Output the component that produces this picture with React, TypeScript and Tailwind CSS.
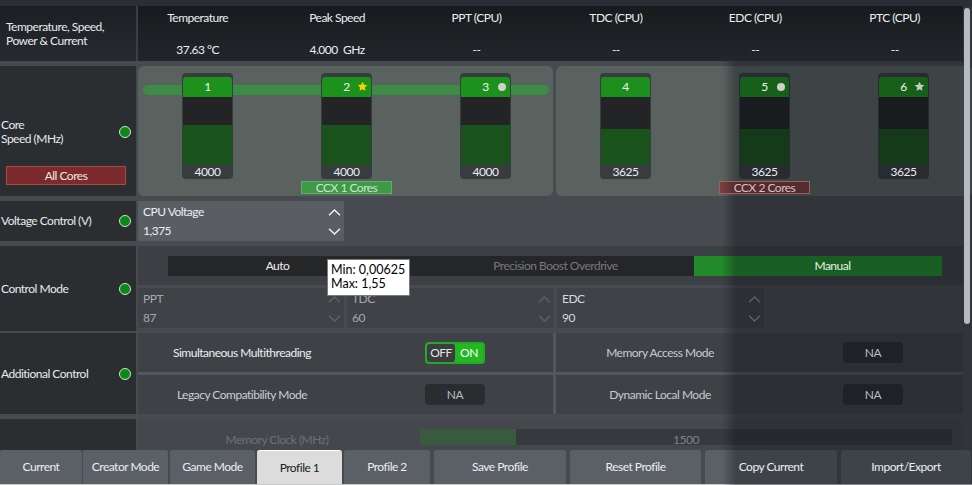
import React from 'react';

type Core = { n: number; value: number; fill: number; icon?: 'gold' | 'dot' | 'gray' };

// the right third of the window sits under a darker translucent panel; a viewport-fixed
// gradient on each background darkens it there without dimming the text
const DIM = 'bg-fixed bg-[linear-gradient(to_right,transparent_722px,rgba(10,14,20,0.36)_736px)]';

const cores: Core[] = [
  { n: 1, value: 4000, fill: 40 },
  { n: 2, value: 4000, fill: 40, icon: 'gold' },
  { n: 3, value: 4000, fill: 40, icon: 'dot' },
  { n: 4, value: 3625, fill: 36 },
  { n: 5, value: 3625, fill: 36, icon: 'dot' },
  { n: 6, value: 3625, fill: 36, icon: 'gray' },
];

const metrics = [
  { label: 'Temperature', value: '37.63 °C' },
  { label: 'Peak Speed', value: '4.000  GHz' },
  { label: 'PPT (CPU)', value: '--' },
  { label: 'TDC (CPU)', value: '--' },
  { label: 'EDC (CPU)', value: '--' },
  { label: 'PTC (CPU)', value: '--' },
];

const tabs = [
  { label: 'Current', w: 'w-[82px]', ml: 'ml-0' },
  { label: 'Creator Mode', w: 'w-[85px]', ml: 'ml-[1px]' },
  { label: 'Game Mode', w: 'w-[85px]', ml: 'ml-[2px]' },
  { label: 'Profile 1', w: 'w-[85px]', ml: 'ml-[2px]', active: true },
  { label: 'Profile 2', w: 'w-[86px]', ml: 'ml-[2px]' },
  { label: 'Save Profile', w: 'w-[132px]', ml: 'ml-[4px]' },
  { label: 'Reset Profile', w: 'w-[131px]', ml: 'ml-[4px]' },
  { label: 'Copy Current', w: 'w-[132px]', ml: 'ml-[4px]' },
  { label: 'Import/Export', w: 'w-[130px]', ml: 'ml-[4px]' },
];

function Star({ color }: { color: string }) {
  return (
    <svg width="11" height="11" viewBox="0 0 24 24">
      <path d="M12 1.5l3.2 6.9 7.3.8-5.5 5 1.6 7.3L12 17.8l-6.6 3.7 1.6-7.3-5.5-5 7.3-.8z" fill={color} />
    </svg>
  );
}

function Chevron({ up, color }: { up?: boolean; color: string }) {
  return (
    <svg width="13" height="7" viewBox="0 0 13 7">
      <path d={up ? 'M1 6.2L6.5 1 12 6.2' : 'M1 0.8L6.5 6 12 0.8'} fill="none" stroke={color} strokeWidth="1.4" />
    </svg>
  );
}

function Dot() {
  return <span className="block w-[12px] h-[12px] rounded-full bg-[#0a8a14] border-[1.5px] border-[#d8dcd8]" />;
}

function CoreBar({ core }: { core: Core }) {
  return (
    <div className={`w-[51px] h-[106px] rounded-[4px] bg-[#393c3f] ${DIM} flex flex-col px-[1px] pt-[4px]`}>
      <div
        className={`relative h-[20px] rounded-t-[3px] flex items-center justify-center text-[12px] text-[#eef5ee] ${DIM} ${
          core.n > 3 ? 'bg-[#1c8e1c]' : 'bg-[#1c921c]'
        }`}
      >
        {core.n}
        {core.icon === 'gold' && (
          <span className="absolute right-[3px] top-[4px]">
            <Star color="#f7d400" />
          </span>
        )}
        {core.icon === 'gray' && (
          <span className="absolute right-[3px] top-[4px]">
            <Star color="#c9c9c9" />
          </span>
        )}
        {core.icon === 'dot' && <span className="absolute right-[4px] top-[6px] w-[8px] h-[8px] rounded-full bg-[#cfcfcf]" />}
      </div>
      <div className={`h-[68px] bg-[#222426] ${DIM} flex flex-col justify-end`}>
        <div className={`bg-[#1a521b] ${DIM}`} style={{ height: core.fill }} />
      </div>
      <div className="h-[13px] text-center text-[12px] leading-[13px] text-[#e6ecf2]">{core.value}</div>
    </div>
  );
}

function CoreGroup({ items, ccx, width }: { items: Core[]; ccx: 1 | 2; width: string }) {
  return (
    <div className={`relative h-full rounded-[6px] bg-[#5a6260] ${DIM} ${width}`}>
      {ccx === 1 && <div className="absolute left-[5px] right-[4px] top-[19px] h-[10px] rounded-full bg-[#3d8c45]" />}
      <div className="relative grid grid-cols-[repeat(3,139px)] pt-[7px]">
        {items.map((c, i) => (
          <div key={c.n} className="flex flex-col items-center">
            <CoreBar core={c} />
            {i === 1 && (
              <div
                className={`mt-[2px] w-[91px] h-[13px] flex items-center justify-center text-[12px] leading-[12px] border ${
                  ccx === 1
                    ? 'bg-[#3e9a47] border-[#62ad68] text-[#cfe6cf]'
                    : `bg-[#7b3d3e] ${DIM} border-[#a0605f] text-[#dcc0c0]`
                }`}
              >
                CCX {ccx} Cores
              </div>
            )}
          </div>
        ))}
      </div>
    </div>
  );
}

function LeftCell({ label }: { label: React.ReactNode }) {
  return (
    <div className="w-[136px] shrink-0 bg-[#2b2e31] flex items-center justify-between pl-[1px] pr-[5px] text-[12px] leading-[14px] text-[#e8eaec]">
      <div>{label}</div>
      <Dot />
    </div>
  );
}

function SpinBox({ label, value, w, bg, text, chev }: { label: string; value: string; w: string; bg: string; text: string; chev: string }) {
  return (
    <div className={`${w} ${bg} ${DIM} h-full flex items-center justify-between pl-[5px] pr-[3px]`}>
      <div className={`flex flex-col text-[12px] leading-[19px] ${text}`}>
        <span>{label}</span>
        <span>{value}</span>
      </div>
      <div className="flex flex-col gap-[12px] pt-[1px]">
        <Chevron up color={chev} />
        <Chevron color={chev} />
      </div>
    </div>
  );
}

function ControlCell({ label, labelColor, children }: { label: string; labelColor: string; children: React.ReactNode }) {
  return (
    <div className={`bg-[#3e4246] ${DIM} flex items-center`}>
      <div className={`w-[208px] text-center text-[12px] ${labelColor}`}>{label}</div>
      <div className="ml-[79px]">{children}</div>
    </div>
  );
}

function NA() {
  return (
    <div className={`w-[60px] h-[21px] rounded-[4px] bg-[#2a2c2f] ${DIM} flex items-center justify-center text-[12px] text-[#b6bec6]`}>
      NA
    </div>
  );
}

export default function App() {
  return (
    <div className={`relative w-[972px] h-[485px] overflow-hidden bg-[#474b50] ${DIM} font-['Lato',sans-serif] tracking-[-0.5px] select-none`}>
      <div className="h-[6px] bg-[#2a2f35]" />

      <div className="pr-[9px] flex flex-col">
        {/* Temperature, Speed, Power & Current */}
        <div className="h-[55px] flex gap-[2px] bg-[#3a3f44]">
          <div className="w-[136px] shrink-0 bg-gradient-to-b from-[#1b1e22] to-[#272b2f] flex items-center pl-[6px] text-[12px] leading-[13.5px] text-[#e8eaec]">
            <div>
              Temperature, Speed,
              <br />
              Power &amp; Current
            </div>
          </div>
          <div className="flex-1 overflow-hidden bg-gradient-to-b from-[#181b1e] to-[#22262a]">
            <div className="-ml-[10px] grid grid-cols-[repeat(6,139.4px)] text-[12px] leading-[14px] text-[#eceef0]">
              {metrics.map((m) => (
                <div key={m.label} className="flex flex-col items-center pt-[5px]">
                  <span>{m.label}</span>
                  <span className="mt-[18px] whitespace-pre">{m.value}</span>
                </div>
              ))}
            </div>
          </div>
        </div>

        {/* Core speed */}
        <div className="mt-[5px] h-[130px] flex gap-[2px]">
          <div className="w-[136px] shrink-0 bg-[#2b2e31] flex flex-col pt-[52px] pl-[1px] pr-[5px]">
            <div className="flex items-center justify-between text-[12px] leading-[14px] text-[#e8eaec]">
              <div>
                Core
                <br />
                Speed (MHz)
              </div>
              <Dot />
            </div>
            <div className="mt-auto mb-[11px] ml-[5px] w-[120px] h-[19px] bg-[#7b2b2c] border border-[#a24a4a] flex items-center justify-center text-[12px] text-[#f0e4e4]">
              All Cores
            </div>
          </div>
          <div className="flex-1 flex gap-[3px]">
            <CoreGroup items={cores.slice(0, 3)} ccx={1} width="w-[415px]" />
            <CoreGroup items={cores.slice(3)} ccx={2} width="flex-1" />
          </div>
        </div>

        {/* Voltage control */}
        <div className="mt-[5px] h-[40px] flex gap-[2px]">
          <LeftCell label="Voltage Control (V)" />
          <SpinBox label="CPU Voltage" value="1,375" w="w-[206px]" bg="bg-[#5a5e63]" text="text-[#eceef0]" chev="#f2f2f2" />
        </div>

        {/* Control mode */}
        <div className="mt-[5px] h-[85px] flex gap-[2px]">
          <LeftCell label="Control Mode" />
          <div className="flex-1 flex flex-col">
            <div className={`h-[39px] bg-[#3c4044] ${DIM} flex items-center pl-[30px]`}>
              <div className="flex h-[20px] text-[12px]">
                <div className="w-[249px] pr-[30px] bg-[#252628] flex items-center justify-center text-[#eeeeee]">Auto</div>
                <div className="w-[277px] bg-[#252628] flex items-center justify-center text-[#77797c]">Precision Boost Overdrive</div>
                <div className={`w-[248px] pl-[29px] bg-[#218a2b] ${DIM} flex items-center justify-center text-[#e6f2e6]`}>Manual</div>
              </div>
            </div>
            <div className="mt-[3px] h-[40px] flex gap-[3px]">
              <SpinBox label="PPT" value="87" w="w-[206px]" bg="bg-[#3f4347]" text="text-[#a4a8ac]" chev="#5e6266" />
              <SpinBox label="TDC" value="60" w="w-[207px]" bg="bg-[#3f4347]" text="text-[#a4a8ac]" chev="#5e6266" />
              <SpinBox label="EDC" value="90" w="w-[207px]" bg="bg-[#3f4347]" text="text-[#d4d8dc]" chev="#5e6266" />
            </div>
          </div>
        </div>

        {/* Additional control */}
        <div className="mt-[2px] h-[81px] flex gap-[2px]">
          <LeftCell label="Additional Control" />
          <div className={`flex-1 grid grid-cols-[415px_1fr] grid-rows-2 gap-[3px] bg-[#53585d] ${DIM}`}>
            <ControlCell label="Simultaneous Multithreading" labelColor="text-[#eceef0]">
              <div className="w-[60px] h-[22px] rounded-[4px] border-2 border-[#25a825] bg-[#25a825] flex text-[12px]">
                <div className="w-[28px] rounded-[3px] bg-[#3a3c3e] flex items-center justify-center text-[#e4e4e4]">OFF</div>
                <div className="flex-1 bg-[#22b822] flex items-center justify-center text-white">ON</div>
              </div>
            </ControlCell>
            <ControlCell label="Memory Access Mode" labelColor="text-[#c6cace]">
              <NA />
            </ControlCell>
            <ControlCell label="Legacy Compatibility Mode" labelColor="text-[#cacfd4]">
              <NA />
            </ControlCell>
            <ControlCell label="Dynamic Local Mode" labelColor="text-[#c6cace]">
              <NA />
            </ControlCell>
          </div>
        </div>

        {/* Memory clock (partly hidden under the tabs) */}
        <div className="mt-[5px] h-[31px] flex gap-[2px] overflow-hidden">
          <div className="w-[136px] shrink-0 bg-[#2b2e31]" />
          <div className={`flex-1 bg-[#44484d] ${DIM} flex pt-[10px]`}>
            <div className="w-[278px] pt-[4px] text-center text-[12px] leading-[14px] text-[#6c7176]">Memory Clock (MHz)</div>
            <div className={`ml-[4px] w-[532px] h-[16px] bg-[#363a3e] ${DIM} relative flex`}>
              <div className="w-[96px] bg-[#3a5a3f]" />
              <div className="flex-1" />
              <span className="absolute inset-x-0 top-[4px] text-center text-[12px] leading-[14px] text-[#7e8286]">1500</span>
            </div>
          </div>
        </div>
      </div>

      {/* Profile tabs */}
      <div className="h-[34px] flex">
        {tabs.map((t) => (
          <div
            key={t.label}
            className={`${t.w} ${t.ml} shrink-0 rounded-t-[3px] flex items-center justify-center text-[12px] ${
              t.active ? 'bg-[#dcdcdc] border-t border-white text-[#222222]' : `bg-[#5b6067] ${DIM} text-[#eceef0]`
            }`}
          >
            {t.label}
          </div>
        ))}
      </div>
      <div className={`h-[1px] bg-[#c9cacb] ${DIM}`} />

      {/* Tooltip */}
      <div className="absolute left-[327px] top-[259px] w-[83px] h-[37px] bg-white border border-[#7a7a7a] px-[3px] pt-[3px] text-[12.5px] leading-[14px] tracking-normal text-black">
        Min: 0,00625
        <br />
        Max: 1,55
      </div>

      {/* Scrollbar */}
      <div className="absolute right-[2px] top-[8px] w-[6px] h-[316px] rounded-full bg-[#b7bbbf]" />
    </div>
  );
}
